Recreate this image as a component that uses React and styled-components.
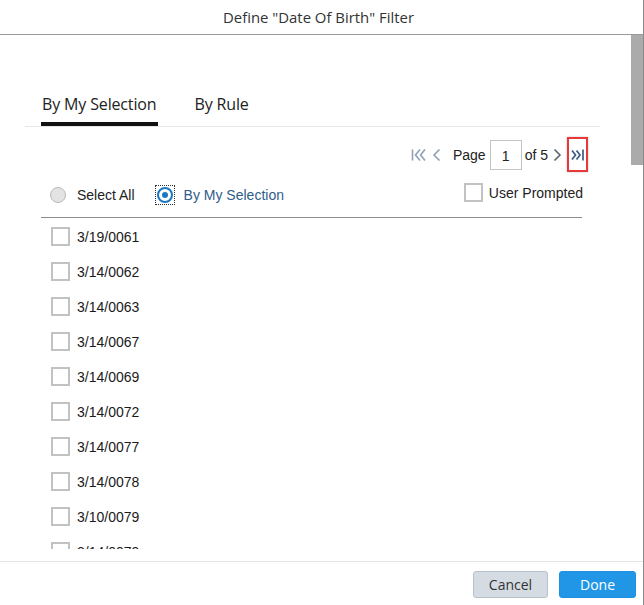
import React from 'react'
import styled, { createGlobalStyle } from 'styled-components'

const GlobalStyle = createGlobalStyle`
  html, body { margin: 0; padding: 0; background: #fff; }
  body { font-family: "Liberation Sans", Arial, sans-serif; color: #222; }
`

const Dialog = styled.div`
  width: 644px;
  height: 605px;
  box-sizing: border-box;
  border-right: 1px solid #8a8a8a;
  display: flex;
  flex-direction: column;
  background: #fff;
  overflow: hidden;
`

const Header = styled.div`
  height: 34px;
  flex: none;
  border-bottom: 1px solid #9a9a9a;
  display: flex;
  align-items: center;
  justify-content: center;
  font-family: "Open Sans", sans-serif;
  font-size: 14.9px;
  color: #333;
  padding-right: 6px;
`

const Body = styled.div`
  flex: 1;
  display: flex;
  min-height: 0;
`

const Content = styled.div`
  flex: 1;
  padding: 59px 33px 0 25px;
  display: flex;
  flex-direction: column;
  min-width: 0;
`

const ScrollTrack = styled.div`
  width: 12px;
  flex: none;
  display: flex;
  flex-direction: column;
`

const ScrollThumb = styled.div`
  height: 130px;
  background: #ababab;
`

const TabBar = styled.div`
  display: flex;
  gap: 35px;
  padding-left: 16px;
  margin-right: -2px;
  border-bottom: 1px solid #e6e6e6;
`

const Tab = styled.div`
  font-family: "Open Sans", sans-serif;
  font-size: 16px;
  line-height: 20px;
  color: #222;
  padding: 0 2px 8px 1px;
  border-bottom: 4px solid ${p => (p.active ? '#111' : 'transparent')};
  letter-spacing: -0.15px;
`

const Section = styled.div`
  padding: 0 16px;
  display: flex;
  flex-direction: column;
`

const Pager = styled.div`
  display: flex;
  align-items: center;
  justify-content: flex-end;
  margin-top: 10px;
  height: 35px;
  margin-right: -6px;
  font-size: 14px;
  color: #222;
`

const PagerIcon = styled.span`
  display: flex;
  align-items: center;
  justify-content: center;
  color: ${p => p.color};
  margin-right: ${p => p.gap || 0}px;
  margin-left: ${p => p.lead || 0}px;
`

const Highlight = styled.span`
  display: flex;
  align-items: center;
  justify-content: center;
  width: 17px;
  height: 31px;
  border: 2px solid #e8383a;
  margin-left: 5px;
  box-shadow: 0 0 2px rgba(0, 0, 0, 0.25);
`

const PageInput = styled.div`
  width: 30px;
  height: 26px;
  border: 1px solid #c4c4c4;
  display: flex;
  align-items: center;
  justify-content: center;
  margin: 0 3px 0 4px;
  padding-top: 2px;
  box-sizing: content-box;
`

const Options = styled.div`
  display: flex;
  align-items: center;
  height: 21px;
  margin-top: 12px;
  padding: 0 0 12px 9px;
  border-bottom: 1px solid #8c8c8c;
  font-size: 14px;
`

const RadioLabel = styled.label`
  display: flex;
  align-items: center;
  gap: 11px;
  color: ${p => (p.selected ? '#2f5d8a' : '#222')};
  margin-right: ${p => (p.selected ? 0 : 22)}px;
`

const RadioFocus = styled.span`
  display: flex;
  padding: 1px;
  border: 1px dotted ${p => (p.focused ? '#333' : 'transparent')};
  margin: -2px;
`

const Radio = styled.span`
  width: 16px;
  height: 16px;
  box-sizing: border-box;
  border-radius: 50%;
  border: ${p => (p.checked ? '2px solid #1a78c2' : '1px solid #b9b9b9')};
  background: ${p => (p.checked ? '#fff' : '#e3e3e3')};
  display: flex;
  align-items: center;
  justify-content: center;
  &::after {
    content: '';
    width: 6px;
    height: 6px;
    border-radius: 50%;
    background: ${p => (p.checked ? '#1a78c2' : 'transparent')};
  }
`

const Prompted = styled.label`
  margin-left: auto;
  display: flex;
  align-items: center;
  gap: 6px;
  margin-top: -4px;
  margin-right: -1px;
`

const Box = styled.span`
  width: 19px;
  height: 19px;
  box-sizing: border-box;
  border: 2px solid #c2c2c2;
  background: #fff;
  flex: none;
`

const List = styled.div`
  height: 331px;
  overflow: hidden;
  padding-top: 1px;
  box-sizing: border-box;
`

const Item = styled.div`
  height: 35px;
  display: flex;
  align-items: center;
  gap: 7px;
  padding-left: 10px;
  font-size: 14px;
  color: #1a1a1a;
`

const Footer = styled.div`
  height: 41px;
  flex: none;
  border-top: 1px solid #e4e4e4;
  display: flex;
  align-items: center;
  justify-content: flex-end;
  gap: 11px;
  padding: 2px 7px 0 0;
`

const Button = styled.button`
  height: 27px;
  width: ${p => p.w}px;
  border-radius: 3px;
  font-family: "Open Sans", sans-serif;
  font-size: 14px;
  cursor: pointer;
  border: 1px solid ${p => (p.primary ? '#1f8fe0' : '#b9c2cb')};
  background: ${p => (p.primary ? '#2196e6' : '#d5dbe2')};
  color: ${p => (p.primary ? '#fff' : '#333')};
`

const FirstIcon = () => (
  <svg width="17" height="14" viewBox="0 0 17 14" fill="none" stroke="currentColor" strokeWidth="1.6">
    <line x1="1.5" y1="1.5" x2="1.5" y2="12.5" />
    <polyline points="9,1.5 4.5,7 9,12.5" />
    <polyline points="14,1.5 9.5,7 14,12.5" />
  </svg>
)

const PrevIcon = () => (
  <svg width="9" height="14" viewBox="0 0 9 14" fill="none" stroke="currentColor" strokeWidth="1.6">
    <polyline points="7.5,1.5 2,7 7.5,12.5" />
  </svg>
)

const NextIcon = () => (
  <svg width="9" height="14" viewBox="0 0 9 14" fill="none" stroke="currentColor" strokeWidth="1.6">
    <polyline points="1.5,1.5 7,7 1.5,12.5" />
  </svg>
)

const LastIcon = () => (
  <svg width="14" height="14" viewBox="0 0 14 14" fill="none" stroke="currentColor" strokeWidth="1.7">
    <polyline points="1,2.5 4.5,7 1,11.5" />
    <polyline points="5.5,2.5 9,7 5.5,11.5" />
    <line x1="12" y1="1.5" x2="12" y2="12.5" />
  </svg>
)

const dates = [
  '3/19/0061',
  '3/14/0062',
  '3/14/0063',
  '3/14/0067',
  '3/14/0069',
  '3/14/0072',
  '3/14/0077',
  '3/14/0078',
  '3/10/0079',
  '3/14/0079',
]

export default function App() {
  return (
    <>
      <GlobalStyle />
      <Dialog>
        <Header>Define "Date Of Birth" Filter</Header>
        <Body>
          <Content>
            <TabBar>
              <Tab active>By My Selection</Tab>
              <Tab>By Rule</Tab>
            </TabBar>
            <Section>
              <Pager>
                <PagerIcon color="#8ea0b4" gap={4}><FirstIcon /></PagerIcon>
                <PagerIcon color="#8ea0b4" gap={12}><PrevIcon /></PagerIcon>
                <span>Page</span>
                <PageInput>1</PageInput>
                <span>of 5</span>
                <PagerIcon color="#5b6470" lead={5}><NextIcon /></PagerIcon>
                <Highlight>
                  <PagerIcon color="#3b5b86"><LastIcon /></PagerIcon>
                </Highlight>
              </Pager>
              <Options>
                <RadioLabel>
                  <RadioFocus><Radio /></RadioFocus>
                  Select All
                </RadioLabel>
                <RadioLabel selected>
                  <RadioFocus focused><Radio checked /></RadioFocus>
                  By My Selection
                </RadioLabel>
                <Prompted>
                  <Box />
                  User Prompted
                </Prompted>
              </Options>
              <List>
                {dates.map((d, i) => (
                  <Item key={i}>
                    <Box />
                    {d}
                  </Item>
                ))}
              </List>
            </Section>
          </Content>
          <ScrollTrack>
            <ScrollThumb />
          </ScrollTrack>
        </Body>
        <Footer>
          <Button w={75}>Cancel</Button>
          <Button primary w={77}>Done</Button>
        </Footer>
      </Dialog>
    </>
  )
}
